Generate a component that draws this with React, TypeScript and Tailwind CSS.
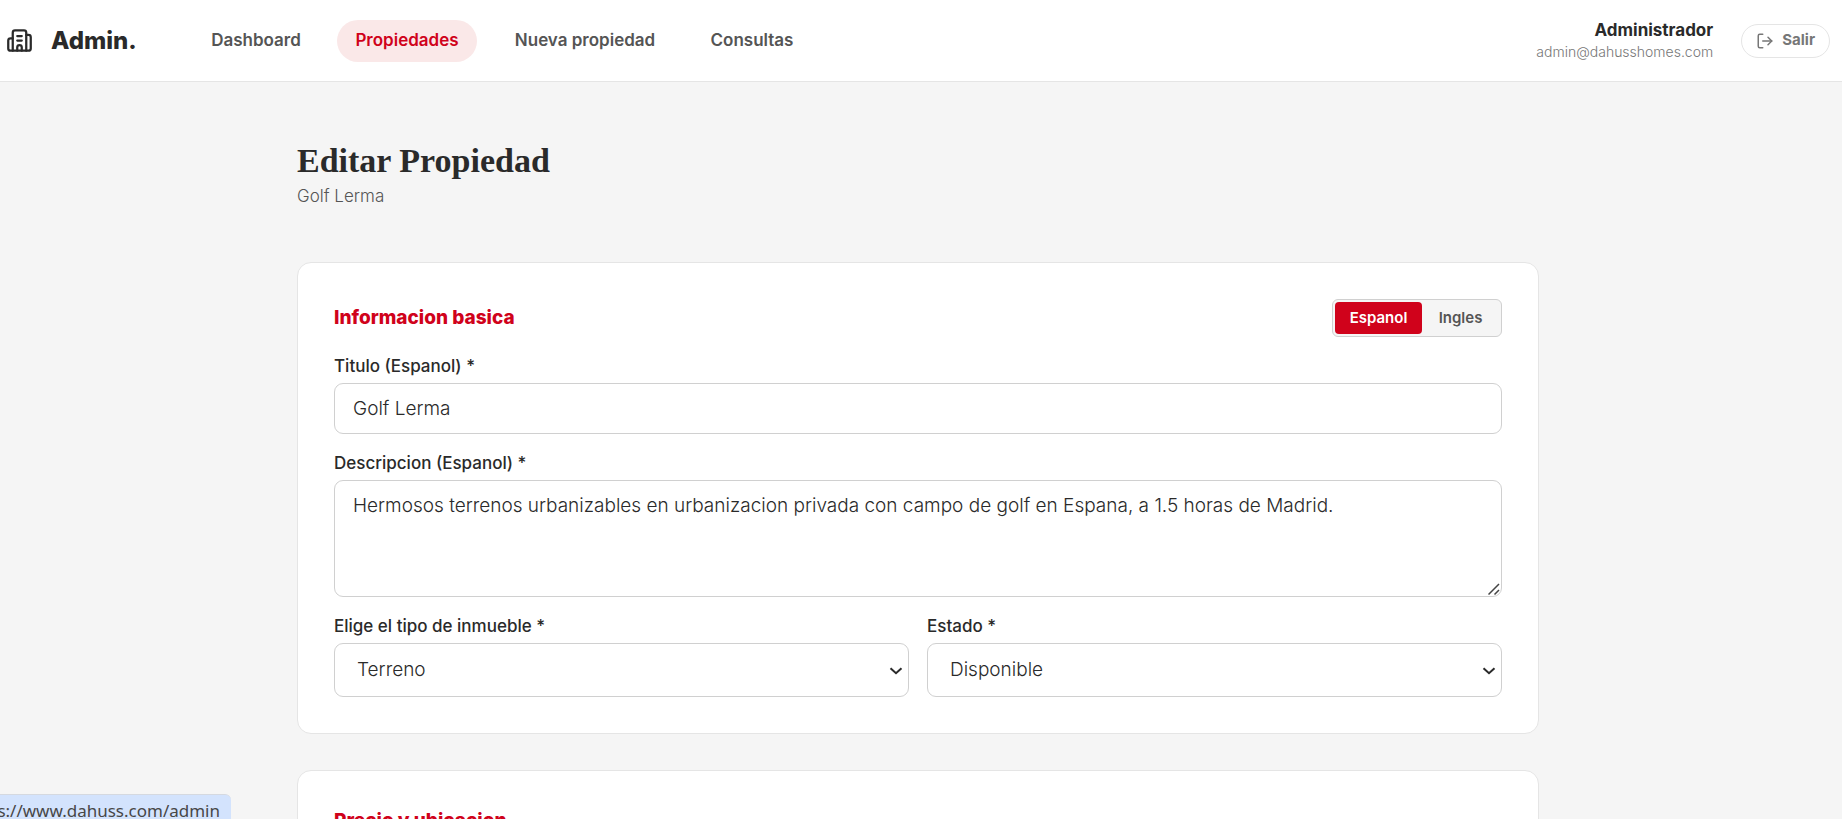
import { useState, type ReactNode } from "react";
import { Building2, LogOut } from "lucide-react";
import clsx from "clsx";

type Lang = "es" | "en";

const NAV_ITEMS = [
  { label: "Dashboard", width: "min-w-[126px]" },
  { label: "Propiedades", width: "min-w-[140px]", active: true },
  { label: "Nueva propiedad", width: "min-w-[180px]" },
  { label: "Consultas", width: "min-w-[118px]" },
];

const LANGS: { id: Lang; label: string; width: string }[] = [
  { id: "es", label: "Espanol", width: "min-w-[87px]" },
  { id: "en", label: "Ingles", width: "min-w-[77px]" },
];

const CONTROL =
  "w-full rounded-[9px] border border-[#d0d0d0] bg-white px-[18px] text-[19px] font-light text-[#2a2a2a] outline-none focus:border-[#d0021b]";

export default function App() {
  return (
    <div className="h-screen overflow-hidden bg-[#f5f5f5] font-['Inter',sans-serif] text-[#2a2a2a]">
      <Header />
      <main className="mr-1.5 pt-[60px]">
        <div className="mx-auto max-w-[1242px]">
          <h1 className="font-['Liberation_Serif',serif] text-[34px] leading-[38px] font-bold">
            Editar Propiedad
          </h1>
          <p className="mt-1 text-[17px] leading-6 font-light text-[#555]">Golf Lerma</p>
          <form className="mt-[54px] flex flex-col gap-9">
            <BasicInfo />
            <Card>
              <SectionTitle>Precio y ubicacion</SectionTitle>
            </Card>
          </form>
        </div>
      </main>
      <div className="fixed bottom-0 left-0 flex h-[25px] w-[231px] justify-end overflow-hidden rounded-tr-md border-t border-[#d5d9e0] bg-[#d3e3fd] pt-0.5 pr-[11px] font-['Noto_Sans',sans-serif] text-[17px] leading-7 whitespace-nowrap text-[#474747]">
        https://www.dahuss.com/admin
      </div>
    </div>
  );
}

function Header() {
  return (
    <header className="flex h-[82px] items-center border-b border-[#e5e5e5] bg-white pr-3 pl-1.5">
      <a href="#" className="flex items-center gap-[18px]">
        <Building2 size={27} aria-hidden />
        <span className="min-w-[86px] text-2xl font-extrabold">Admin.</span>
      </a>
      <nav className="ml-14 flex gap-[18px]">
        {NAV_ITEMS.map((item) => (
          <a
            key={item.label}
            href="#"
            aria-current={item.active ? "page" : undefined}
            className={clsx(
              "flex h-[42px] items-center justify-center rounded-full text-[17px] font-semibold whitespace-nowrap",
              item.width,
              item.active ? "bg-[#fae8e8] text-[#d0021b]" : "text-[#555]",
            )}
          >
            {item.label}
          </a>
        ))}
      </nav>
      <div className="ml-auto flex items-center gap-7">
        <div className="text-right">
          <p className="text-[17px] leading-[22px] font-bold">Administrador</p>
          <p className="text-sm leading-[22px] font-light text-[#777]">admin@dahusshomes.com</p>
        </div>
        <button
          type="button"
          className="flex h-[34px] items-center gap-2 rounded-full border border-[#e5e5e5] px-3.5 text-[15px] font-bold text-[#777]"
        >
          <LogOut size={18} strokeWidth={2} aria-hidden />
          Salir
        </button>
      </div>
    </header>
  );
}

function BasicInfo() {
  const [lang, setLang] = useState<Lang>("es");
  const suffix = lang === "es" ? "Espanol" : "Ingles";

  return (
    <Card>
      <div className="flex items-center justify-between">
        <SectionTitle>Informacion basica</SectionTitle>
        <div className="flex h-[38px] rounded-md border border-[#d0d0d0] bg-[#f5f5f5] p-0.5">
          {LANGS.map((l) => (
            <button
              key={l.id}
              type="button"
              onClick={() => setLang(l.id)}
              className={clsx(
                "rounded text-[15px] font-semibold",
                l.width,
                l.id === lang ? "bg-[#d0021b] text-white" : "text-[#555]",
              )}
            >
              {l.label}
            </button>
          ))}
        </div>
      </div>
      <Field id="title" label={`Titulo (${suffix}) *`}>
        <input id="title" type="text" defaultValue="Golf Lerma" className={clsx(CONTROL, "h-[51px]")} />
      </Field>
      <Field id="description" label={`Descripcion (${suffix}) *`}>
        <div className="relative">
          <textarea
            id="description"
            defaultValue="Hermosos terrenos urbanizables en urbanizacion privada con campo de golf en Espana, a 1.5 horas de Madrid."
            className={clsx(
              CONTROL,
              "block h-[117px] resize-y py-[11px] leading-[27px] [&::-webkit-resizer]:bg-transparent",
            )}
          />
          <svg
            viewBox="0 0 12 12"
            className="pointer-events-none absolute right-0.5 bottom-0.5 size-3"
            stroke="#444"
            strokeWidth="1.5"
            aria-hidden
          >
            <path d="M0.5 11.5 11 1M6.5 11.5 11 7" />
          </svg>
        </div>
      </Field>
      <div className="grid grid-cols-2 gap-[18px]">
        <Field id="type" label="Elige el tipo de inmueble *">
          <Select id="type" options={["Terreno", "Casa", "Departamento"]} />
        </Field>
        <Field id="status" label="Estado *">
          <Select id="status" options={["Disponible", "Vendido"]} />
        </Field>
      </div>
    </Card>
  );
}

function Card({ children }: { children: ReactNode }) {
  return (
    <section className="flex flex-col gap-[18px] rounded-[14px] border border-[#e5e5e5] bg-white p-9">
      {children}
    </section>
  );
}

function SectionTitle({ children }: { children: ReactNode }) {
  return <h2 className="text-[19px] leading-7 font-extrabold text-[#d0021b]">{children}</h2>;
}

function Field({ id, label, children }: { id: string; label: string; children: ReactNode }) {
  return (
    <div className="flex flex-col gap-1.5">
      <label htmlFor={id} className="text-[17px] leading-[22px] font-medium">
        {label}
      </label>
      {children}
    </div>
  );
}

function Select({ id, options }: { id: string; options: string[] }) {
  return (
    <div className="relative">
      <select id={id} className={clsx(CONTROL, "block h-[54px] appearance-none pl-[22px]")}>
        {options.map((o) => (
          <option key={o}>{o}</option>
        ))}
      </select>
      <svg
        viewBox="0 0 14 8"
        className="pointer-events-none absolute top-6 right-1.5 h-2 w-3.5"
        fill="none"
        stroke="#2a2a2a"
        strokeWidth="2"
        aria-hidden
      >
        <path d="M1.5 1.2 7 6.2l5.5-5" />
      </svg>
    </div>
  );
}
